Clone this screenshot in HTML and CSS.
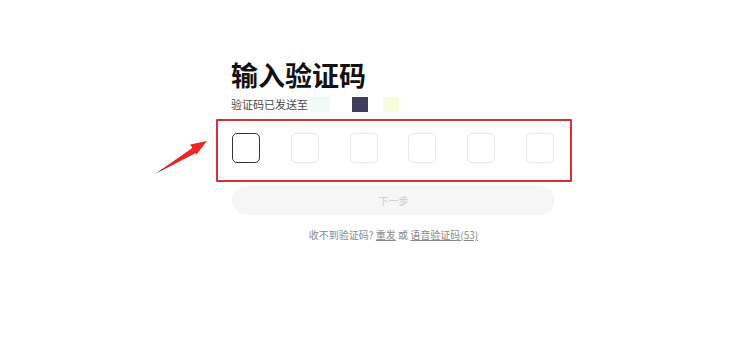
FILE: index.html
```html
<!DOCTYPE html>
<html lang="zh-CN">
<head>
<meta charset="utf-8">
<title>输入验证码</title>
<link rel="stylesheet" href="styles.css">
</head>
<body>
<div class="wrap">
  <div class="head">
    <h1 class="title">输入验证码</h1>
    <div class="sub">
      <span class="sub-text">验证码已发送至</span>
      <span class="blot blot-mint"></span>
      <span class="blot blot-navy"></span>
      <span class="blot blot-yellow"></span>
    </div>
  </div>
  <div class="code-box">
    <div class="cell cell-active"></div>
    <div class="cell"></div>
    <div class="cell"></div>
    <div class="cell"></div>
    <div class="cell"></div>
    <div class="cell"></div>
  </div>
  <button class="next" type="button">下一步</button>
  <p class="resend">收不到验证码? <a class="link">重发</a> 或 <a class="link">语音验证码(53)</a></p>
</div>
<svg class="arrow" width="65" height="45" viewBox="0 0 65 45">
  <defs>
    <linearGradient id="ag" x1="0" y1="1" x2="1" y2="0">
      <stop offset="0" stop-color="#5a2a2a"/>
      <stop offset="0.35" stop-color="#e02424"/>
      <stop offset="1" stop-color="#f02a2a"/>
    </linearGradient>
  </defs>
  <polygon points="5,39 43,12.5 47,17.5" fill="url(#ag)"/>
  <polygon points="57,6 46.6,19.6 40.2,9.4" fill="#ee2626"/>
</svg>
</body>
</html>
```

FILE: styles.css
```css
html, body {
  margin: 0;
  padding: 0;
  background: #ffffff;
}
body {
  width: 750px;
  height: 337px;
  position: relative;
  overflow: hidden;
  font-family: "Noto Sans CJK SC", "Noto Sans", sans-serif;
  color: #222;
}
.wrap {
  width: 356px;
  margin-left: 216px;
  padding-top: 60px;
  display: flex;
  flex-direction: column;
}
.head {
  padding-left: 15px;
}
.title {
  margin: 0;
  font-size: 27px;
  line-height: 30px;
  font-weight: 700;
  color: #111;
  letter-spacing: 0;
}
.sub {
  margin-top: 6px;
  height: 16px;
  display: flex;
  align-items: center;
}
.sub-text {
  font-size: 11px;
  line-height: 16px;
  color: #4a4a4a;
  width: 79px;
}
.blot {
  display: block;
  height: 15px;
}
.blot-mint {
  width: 20px;
  background: #f0faf6;
}
.blot-navy {
  width: 16px;
  margin-left: 22px;
  background: #3f3d5e;
}
.blot-yellow {
  width: 16px;
  margin-left: 15px;
  background: #f7fcdc;
}
.code-box {
  margin-top: 7px;
  border: 2px solid #d1353b;
  border-radius: 1px;
  padding: 12px 16px 17px 14px;
  display: flex;
  justify-content: space-between;
  box-shadow: 0 0 1px rgba(216, 51, 58, 0.4);
}
.cell {
  width: 26px;
  height: 28px;
  border: 1px solid #e9e9e9;
  border-radius: 5px;
  box-sizing: content-box;
}
.cell-active {
  border-color: #333;
}
.next {
  margin: 4px 0 0 16px;
  width: 323px;
  height: 29px;
  border: 0;
  border-radius: 15px;
  background: #f6f6f6;
  color: #c9c9c9;
  font-family: "Noto Sans CJK SC", sans-serif;
  font-size: 10px;
  padding: 0;
}
.resend {
  margin: 13px 0 0 16px;
  width: 323px;
  text-align: center;
  font-size: 10px;
  line-height: 14px;
  color: #8a8a8a;
}
.link {
  color: #8a8a8a;
  text-decoration: underline;
}
.arrow {
  position: absolute;
  left: 150px;
  top: 135px;
}
```
